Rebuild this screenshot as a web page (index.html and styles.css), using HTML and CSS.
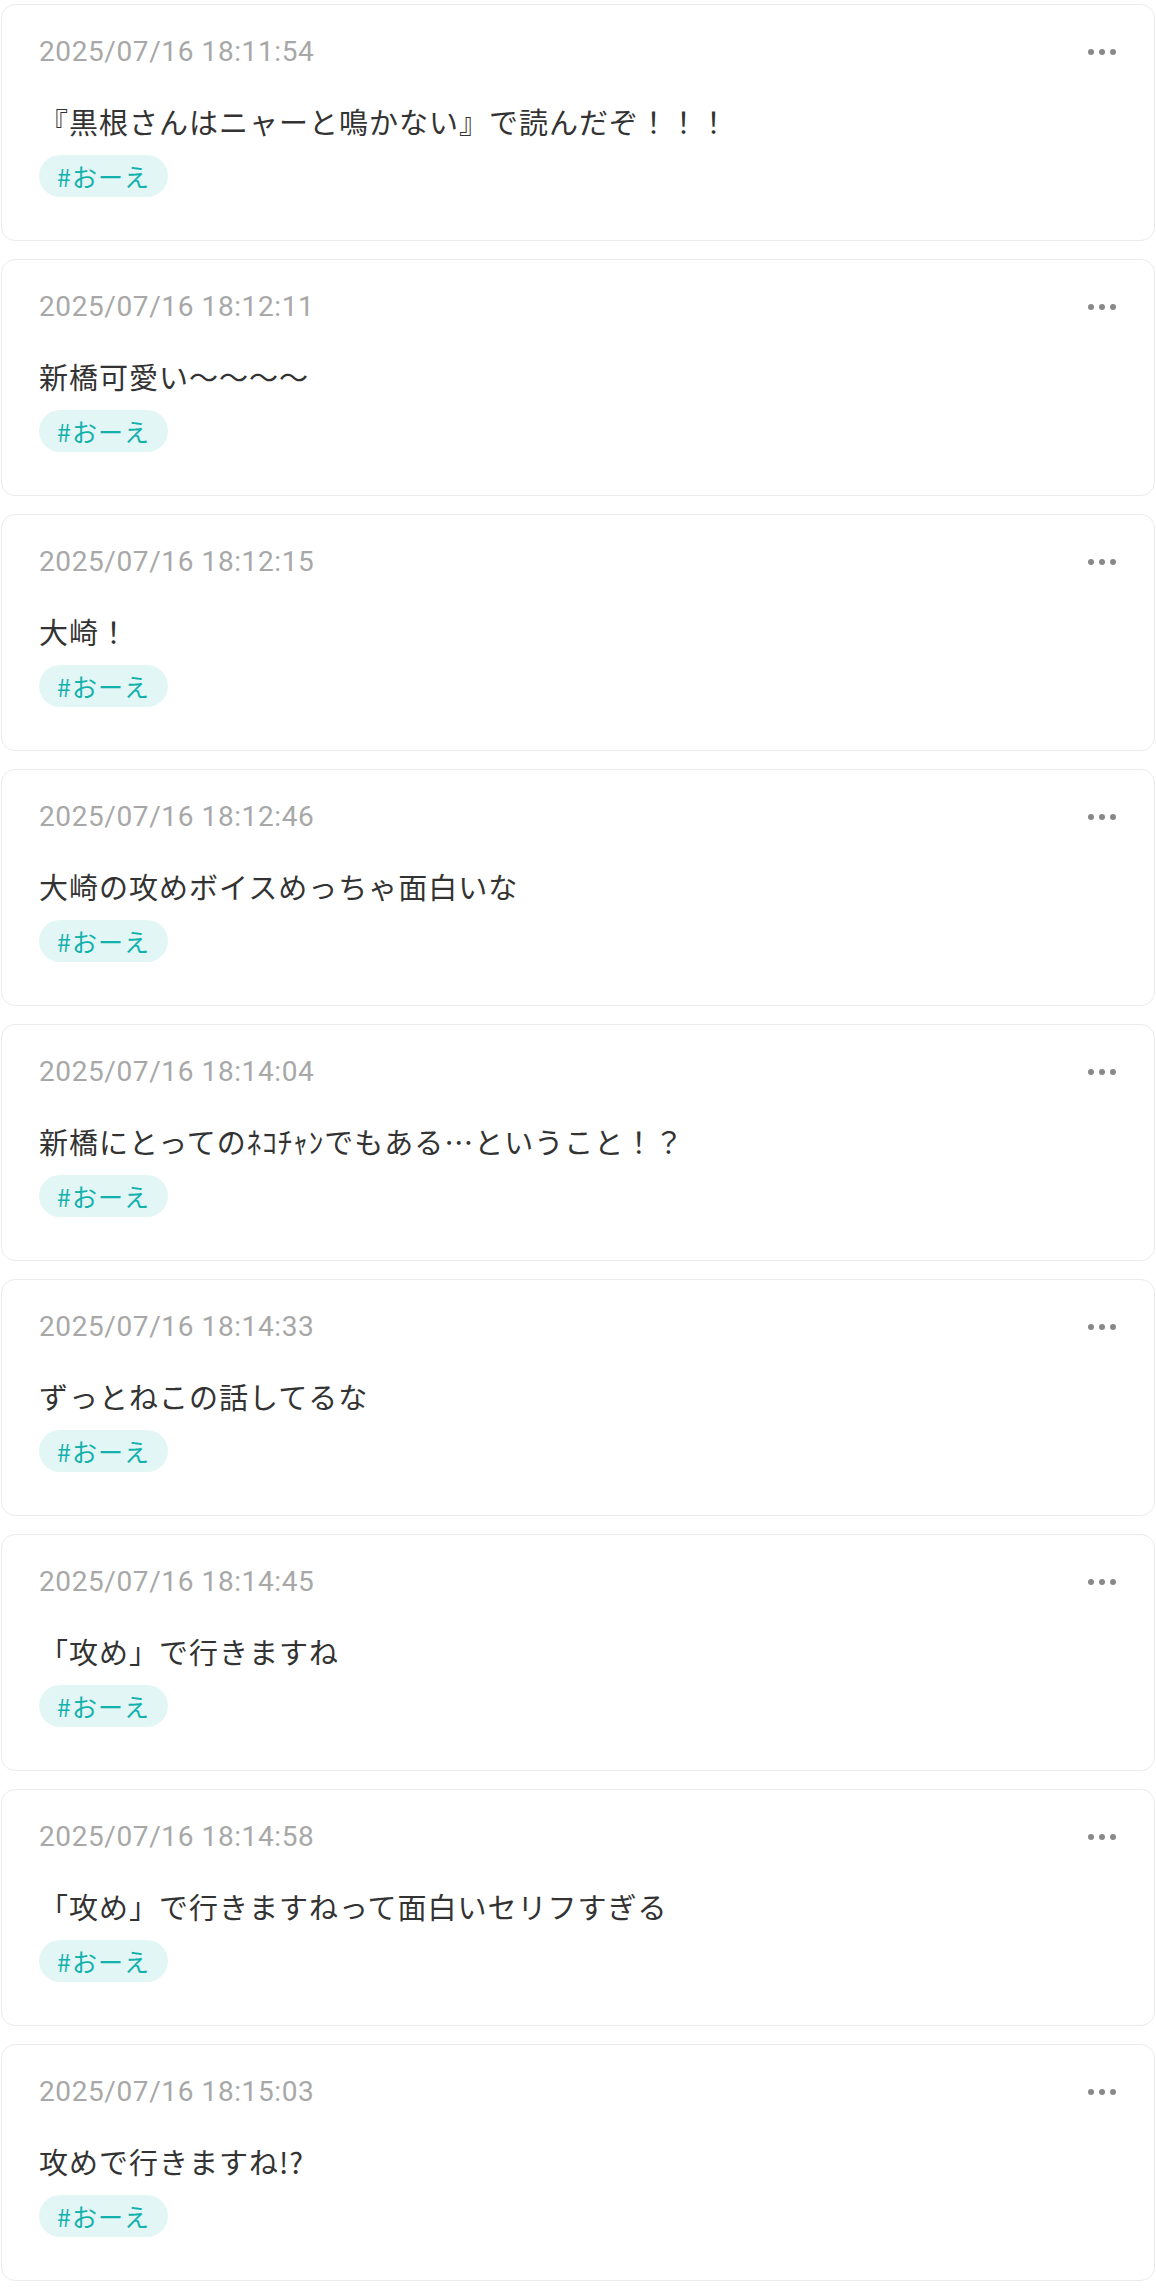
FILE: index.html
```html
<!DOCTYPE html>
<html lang="ja">
<head>
<meta charset="utf-8">
<title>posts</title>
<link rel="stylesheet" href="styles.css">
</head>
<body>
<main class="list">
  <article class="card">
    <div class="head"><time class="stamp">2025/07/16 18:11:54</time><button class="more" aria-label="more"><span></span><span></span><span></span></button></div>
    <p class="body">『黒根さんはニャーと鳴かない』で読んだぞ！！！</p>
    <div class="tags"><span class="tag">#おーえ</span></div>
  </article>
  <article class="card">
    <div class="head"><time class="stamp">2025/07/16 18:12:11</time><button class="more" aria-label="more"><span></span><span></span><span></span></button></div>
    <p class="body">新橋可愛い～～～～</p>
    <div class="tags"><span class="tag">#おーえ</span></div>
  </article>
  <article class="card">
    <div class="head"><time class="stamp">2025/07/16 18:12:15</time><button class="more" aria-label="more"><span></span><span></span><span></span></button></div>
    <p class="body">大崎！</p>
    <div class="tags"><span class="tag">#おーえ</span></div>
  </article>
  <article class="card">
    <div class="head"><time class="stamp">2025/07/16 18:12:46</time><button class="more" aria-label="more"><span></span><span></span><span></span></button></div>
    <p class="body">大崎の攻めボイスめっちゃ面白いな</p>
    <div class="tags"><span class="tag">#おーえ</span></div>
  </article>
  <article class="card">
    <div class="head"><time class="stamp">2025/07/16 18:14:04</time><button class="more" aria-label="more"><span></span><span></span><span></span></button></div>
    <p class="body">新橋にとってのﾈｺﾁｬﾝでもある…ということ！？</p>
    <div class="tags"><span class="tag">#おーえ</span></div>
  </article>
  <article class="card">
    <div class="head"><time class="stamp">2025/07/16 18:14:33</time><button class="more" aria-label="more"><span></span><span></span><span></span></button></div>
    <p class="body">ずっとねこの話してるな</p>
    <div class="tags"><span class="tag">#おーえ</span></div>
  </article>
  <article class="card">
    <div class="head"><time class="stamp">2025/07/16 18:14:45</time><button class="more" aria-label="more"><span></span><span></span><span></span></button></div>
    <p class="body">「攻め」で行きますね</p>
    <div class="tags"><span class="tag">#おーえ</span></div>
  </article>
  <article class="card">
    <div class="head"><time class="stamp">2025/07/16 18:14:58</time><button class="more" aria-label="more"><span></span><span></span><span></span></button></div>
    <p class="body">「攻め」で行きますねって面白いセリフすぎる</p>
    <div class="tags"><span class="tag">#おーえ</span></div>
  </article>
  <article class="card">
    <div class="head"><time class="stamp">2025/07/16 18:15:03</time><button class="more" aria-label="more"><span></span><span></span><span></span></button></div>
    <p class="body">攻めで行きますね!?</p>
    <div class="tags"><span class="tag">#おーえ</span></div>
  </article>
</main>
</body>
</html>
```

FILE: styles.css
```css
html, body {
  margin: 0;
  padding: 0;
  background: #ffffff;
}

body {
  font-family: "Noto Sans CJK JP", "Noto Sans", sans-serif;
  color: #333333;
}

.list {
  display: flex;
  flex-direction: column;
  gap: 18px;
  padding: 4px 1px 0 1px;
}

.card {
  box-sizing: border-box;
  height: 237px;
  border: 1px solid #ebebeb;
  border-radius: 14px;
  background: #ffffff;
  padding: 29px 38px 0 37px;
}

.head {
  display: flex;
  align-items: center;
  justify-content: space-between;
  height: 36px;
}

.stamp {
  font-family: Roboto, "Noto Sans", sans-serif;
  font-size: 28px;
  line-height: 36px;
  letter-spacing: 0.6px;
  color: #a8a8a8;
}

.more {
  display: flex;
  align-items: center;
  gap: 5px;
  padding: 0;
  margin: 0;
  border: 0;
  background: none;
  height: 36px;
}

.more span {
  display: block;
  width: 6px;
  height: 6px;
  border-radius: 50%;
  background: #888888;
}

.body {
  margin: 31px 0 0 0;
  font-size: 29px;
  line-height: 40px;
  letter-spacing: 1px;
  color: #333333;
}

.tags {
  display: flex;
  margin-top: 14px;
}

.tag {
  display: inline-flex;
  align-items: center;
  height: 42px;
  padding: 0 18px;
  border-radius: 21px;
  background: #e3f6f6;
  color: #13b1ad;
  font-size: 25px;
  letter-spacing: 1px;
}
```
